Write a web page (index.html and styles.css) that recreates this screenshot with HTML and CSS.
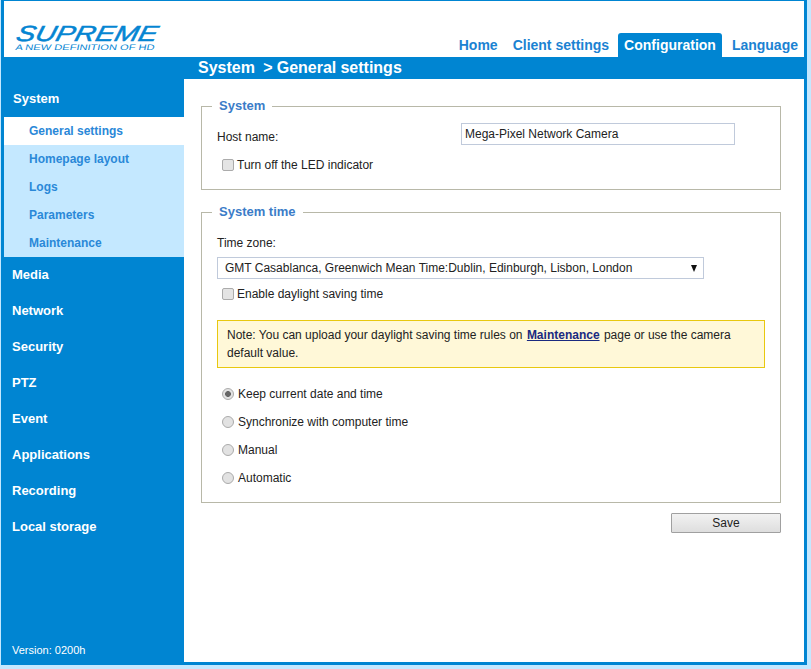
FILE: index.html
```html
<!DOCTYPE html>
<html lang="en">
<head>
<meta charset="utf-8">
<title>General settings</title>
<link rel="stylesheet" href="styles.css">
</head>
<body>
<div class="frame">
  <header class="header">
    <svg class="logo" width="150" height="32" viewBox="0 0 150 32" aria-label="Supreme">
      <text class="logo-main" transform="translate(1 21) skewX(-14)" textLength="141" lengthAdjust="spacingAndGlyphs">SUPREME</text>
      <text class="logo-tag" transform="translate(1 30) skewX(-12)" textLength="139" lengthAdjust="spacingAndGlyphs">A NEW  DEFINITION  OF  HD</text>
    </svg>
    <nav class="tabs">
      <a class="tab">Home</a>
      <a class="tab">Client settings</a>
      <a class="tab tab-active">Configuration</a>
      <a class="tab">Language</a>
    </nav>
  </header>
  <div class="body">
    <aside class="sidebar">
      <ul class="menu">
        <li class="menu-item menu-first">System</li>
        <li class="sub sub-active">General settings</li>
        <li class="sub">Homepage layout</li>
        <li class="sub">Logs</li>
        <li class="sub">Parameters</li>
        <li class="sub">Maintenance</li>
        <li class="menu-item">Media</li>
        <li class="menu-item">Network</li>
        <li class="menu-item">Security</li>
        <li class="menu-item">PTZ</li>
        <li class="menu-item">Event</li>
        <li class="menu-item">Applications</li>
        <li class="menu-item">Recording</li>
        <li class="menu-item">Local storage</li>
      </ul>
      <div class="version">Version: 0200h</div>
    </aside>
    <main class="main">
      <h1 class="title">System&nbsp; &gt; General settings</h1>
      <div class="content">
        <fieldset class="group group-system">
          <legend class="legend">System</legend>
          <div class="host-row">
            <label class="host-label" for="host">Host name:</label>
            <input class="text-input" id="host" type="text" value="Mega-Pixel Network Camera">
          </div>
          <label class="check-row check-led"><input class="check" type="checkbox">Turn off the LED indicator</label>
        </fieldset>
        <fieldset class="group group-time">
          <legend class="legend">System time</legend>
          <div class="tz-label">Time zone:</div>
          <div class="select-wrap">
            <select class="select"><option>GMT Casablanca, Greenwich Mean Time:Dublin, Edinburgh, Lisbon, London</option></select>
          </div>
          <label class="check-row check-dst"><input class="check" type="checkbox">Enable daylight saving time</label>
          <div class="note">
            <div class="note-line"><span>Note: You can upload your daylight saving time rules on</span> <a class="note-link">Maintenance</a> <span>page or use the camera</span></div>
            <div class="note-line">default value.</div>
          </div>
          <div class="radios">
            <label class="radio-row"><input class="radio" type="radio" name="t" checked>Keep current date and time</label>
            <label class="radio-row"><input class="radio" type="radio" name="t">Synchronize with computer time</label>
            <label class="radio-row"><input class="radio" type="radio" name="t">Manual</label>
            <label class="radio-row"><input class="radio" type="radio" name="t">Automatic</label>
          </div>
        </fieldset>
        <div class="actions"><button class="save" type="button">Save</button></div>
      </div>
    </main>
  </div>
</div>
</body>
</html>
```
FILE: styles.css
```css
* { box-sizing: border-box; }
html, body { margin: 0; padding: 0; }
body {
  background: #c4e8ff;
  font: 12px/14px "Liberation Sans", Arial, sans-serif;
  color: #222;
  height: 669px;
  overflow: hidden;
}
.frame {
  width: 806px;
  height: 665px;
  margin-left: 1px;
  border-style: solid;
  border-color: #0085d2;
  border-width: 1px 3px 3px 3px;
  background: #fff;
  display: flex;
  flex-direction: column;
}
.header {
  height: 56px;
  display: flex;
  justify-content: space-between;
  align-items: flex-end;
  flex: none;
}
.logo { display: block; margin: 0 0 5px 10px; overflow: visible; }
.logo-main {
  font: italic 400 22px "Liberation Sans", sans-serif;
  fill: #0585d2;
  stroke: #0585d2;
  stroke-width: 0.5px;
}
.logo-tag {
  font: 400 8px "Liberation Sans", sans-serif;
  fill: #0585d2;
}
.tabs { display: flex; gap: 3px; }
.tab {
  height: 24px;
  padding: 5px 6px 0;
  font: 700 14px/14px "Liberation Sans", sans-serif;
  color: #1b82d2;
  border-radius: 3px 3px 0 0;
}
.tab-active { background: #0085d2; color: #fff; margin-right: 1px; }
.body { flex: 1; display: flex; min-height: 0; }
.sidebar {
  width: 180px;
  flex: none;
  background: #0085d2;
  padding-top: 22px;
  display: flex;
  flex-direction: column;
  justify-content: space-between;
}
.menu { list-style: none; margin: 0; padding: 0; }
.menu-item {
  height: 36px;
  padding: 10px 0 0 8px;
  font: 700 13px/15px "Liberation Sans", sans-serif;
  color: #fff;
}
.menu-first { height: 38px; padding: 12px 0 0 9px; }
.sub {
  height: 28px;
  padding: 7px 0 0 25px;
  font: 700 12px/14px "Liberation Sans", sans-serif;
  color: #2a88d8;
  background: #c4e8ff;
}
.sub-active { background: #fff; }
.version { color: #fff; font-size: 11px; padding: 0 0 5px 8px; }
.main { flex: 1; min-width: 0; display: flex; flex-direction: column; }
.title {
  margin: 0;
  height: 22px;
  padding: 1px 0 0 14px;
  background: #0085d2;
  color: #fff;
  font: 700 16px/20px "Liberation Sans", sans-serif;
  word-spacing: -0.3px;
  flex: none;
}
.content { padding: 19px 23px 0 17px; }
.group {
  margin: 0;
  min-width: 0;
  padding: 0 15px;
  border: 1px solid #b8b8a8;
}
.group-system { padding-bottom: 17px; }
.group-time { margin-top: 14px; padding-bottom: 10px; }
.legend {
  padding: 0 7px 2px;
  margin-left: -5px;
  font: 700 13px/15px "Liberation Sans", sans-serif;
  color: #3b7cc8;
}
.host-row { display: flex; padding-top: 8px; }
.host-label { width: 244px; padding-top: 7px; }
.text-input {
  width: 274px;
  height: 22px;
  padding: 0 3px;
  border: 1px solid #c0cadb;
  font: 12px "Liberation Sans", sans-serif;
  color: #222;
  outline: none;
}
.check-row { display: flex; align-items: center; height: 14px; }
.check-led { margin-top: 13px; }
.check-dst { margin-top: 8px; }
.check {
  appearance: none;
  width: 12px;
  height: 12px;
  margin: 0 3px 0 5px;
  background: #e4e4e4;
  border: 1px solid #ababab;
  border-radius: 2px;
  flex: none;
}
.tz-label { padding-top: 15px; }
.select-wrap { position: relative; width: 487px; margin-top: 7px; }
.select-wrap::after {
  content: "";
  position: absolute;
  right: 7px;
  top: 8px;
  border-style: solid;
  border-width: 7px 3px 0;
  border-color: #111 transparent transparent;
  pointer-events: none;
}
.select {
  appearance: none;
  display: block;
  width: 100%;
  height: 22px;
  padding: 0 0 0 7px;
  background: #fff;
  border: 1px solid #c0cadb;
  border-radius: 0;
  font: 12px "Liberation Sans", sans-serif;
  color: #222;
}
.note {
  width: 548px;
  height: 48px;
  margin-top: 19px;
  padding: 5px 9px 0;
  background: #fff8d8;
  border: 1px solid #e8c80f;
  line-height: 18px;
}
.note-link { color: #1a2a80; font-weight: 700; text-decoration: underline; margin: 0 1px; }
.radios { margin-top: 12px; }
.radio-row { display: flex; align-items: center; height: 28px; }
.radio {
  appearance: none;
  width: 12px;
  height: 12px;
  margin: 0 4px 0 5px;
  background: #e2e2e2;
  border: 1px solid #ababab;
  border-radius: 50%;
  flex: none;
}
.radio:checked { background: radial-gradient(circle, #666 0 2.6px, #e2e2e2 3.2px); }
.actions { display: flex; justify-content: flex-end; margin-top: 10px; }
.save {
  width: 110px;
  height: 20px;
  padding: 0;
  border: 1px solid #a0a0a0;
  border-radius: 1px;
  background: linear-gradient(#f2f2f2, #dedede);
  font: 12px "Liberation Sans", sans-serif;
  color: #222;
}
```
